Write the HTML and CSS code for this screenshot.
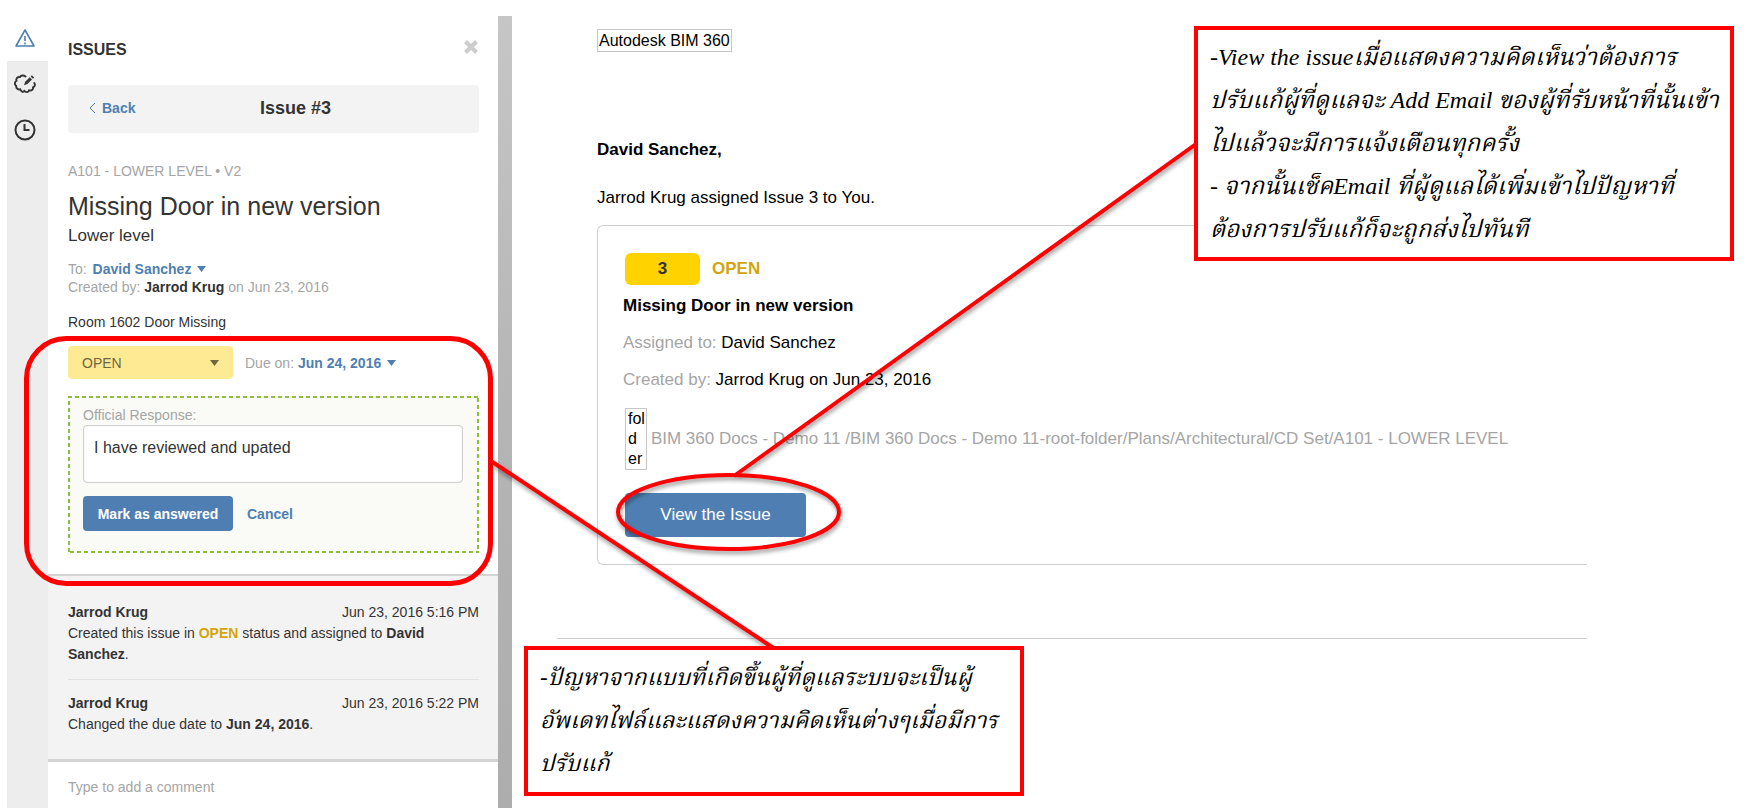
FILE: index.html
```html
<!DOCTYPE html>
<html lang="th">
<head>
    <meta charset="UTF-8">
    <meta name="viewport" content="width=device-width, initial-scale=1.0">
    <title>BIM 360 Issues</title>
    <link rel="stylesheet" href="styles.css">
</head>
<body>

    <div class="page">
        <nav class="rail">
            <button class="rail-btn active" aria-label="Issues">
                <svg width="22" height="20" viewBox="0 0 22 20" fill="none" stroke="#4f7fb2" stroke-width="1.6" stroke-linejoin="round">
                    <path d="M11 1 L20 17 H2 Z"/>
                    <path d="M11 7 V12 M11 13.500 V15.500"/>
                </svg>
            </button>
            <button class="rail-btn" aria-label="Markups">
                <svg width="22" height="20" viewBox="0 0 22 20" fill="none" stroke="#333" stroke-width="1.9" stroke-linecap="round">
                    <path d="M11.5 2.5 C9.500 1 7 1.300 6 3 C3.500 2.600 1.800 4.500 2.500 6.800 C.4 8 .4 10.500 2.200 12 C2 14.500 4 16 6.200 15.300 C7 17.500 9 18.500 10.500 17 C12 18.800 14.500 18.400 15.200 16.300 C17.500 17.200 19.300 15.500 19 13.400 C21 12.500 21.300 10.500 20.300 9"/>
                    <path d="M10 11.300 L11.200 7.700 L15.800 3.300 L18 5.600 L13.400 10.100 Z" fill="#333" stroke="none"/>
                    <path d="M16.700 2.500 L17.900 1.300 L20.100 3.600 L18.900 4.800 Z" fill="#333" stroke="none"/>
                </svg>
            </button>
            <button class="rail-btn" aria-label="History">
                <svg width="22" height="22" viewBox="0 0 22 22" fill="none" stroke="#333" stroke-width="2">
                    <circle cx="11" cy="11" r="9.500"/>
                    <path d="M10.500 5 V11 H15.500"/>
                </svg>
            </button>
        </nav>

        <aside class="panel">
            <div class="issue">
                <div class="panel-head">
                    <h2>ISSUES</h2>
                    <button class="close" aria-label="Close">
                        <svg width="14" height="14" viewBox="0 0 14 14" stroke="#ccc" stroke-width="4">
                            <path d="M1.500 1.500 L12.500 12.500 M12.500 1.500 L1.500 12.500"/>
                        </svg>
                    </button>
                </div>

                <div class="issue-bar">
                    <a class="back" href="#">
                        <svg width="7" height="12" viewBox="0 0 7 12" fill="none" stroke="#4f7fb2">
                            <path d="M6 1 L1 6 L6 11"/>
                        </svg>
                        Back
                    </a>
                    <span class="issue-number">Issue #3</span>
                </div>

                <div class="sheet">A101 - LOWER LEVEL • V2</div>
                <h1>Missing Door in new version</h1>
                <div class="location">Lower level</div>

                <div class="meta">
                    <div>To: <button class="link-btn assignee">David Sanchez <svg class="caret" width="9" height="6" viewBox="0 0 9 6"><path d="M0 0 H9 L4.500 6 Z"/></svg></button></div>
                    <div>Created by: <b>Jarrod Krug</b> on Jun 23, 2016</div>
                </div>
                <div class="description">Room 1602 Door Missing</div>

                <div class="status-row">
                    <div class="status">
                        <select aria-label="Status">
                            <option>OPEN</option>
                        </select>
                        <svg class="status-caret" width="9" height="6" viewBox="0 0 9 6"><path d="M0 0 H9 L4.500 6 Z"/></svg>
                    </div>
                    <div class="due">Due on: <button class="link-btn">Jun 24, 2016 <svg class="caret" width="9" height="6" viewBox="0 0 9 6"><path d="M0 0 H9 L4.500 6 Z"/></svg></button></div>
                </div>

                <form class="response">
                    <!-- fine dashed outline, shorter dashes than a CSS border gives -->
                    <svg class="outline" width="100%" height="100%" fill="none" stroke="#8fbc3c" stroke-width="4" stroke-dasharray="4 3">
                        <rect width="100%" height="100%"/>
                    </svg>
                    <label for="response">Official Response:</label>
                    <textarea id="response" spellcheck="false">I have reviewed and upated</textarea>
                    <div class="response-actions">
                        <button type="button" class="answered">Mark as answered</button>
                        <button type="button" class="link-btn">Cancel</button>
                    </div>
                </form>
            </div>

            <div class="activity">
                <div class="entry">
                    <div class="entry-head"><b>Jarrod Krug</b><span>Jun 23, 2016 5:16 PM</span></div>
                    <div>Created this issue in <b class="open">OPEN</b> status and assigned to <b>David Sanchez</b>.</div>
                </div>
                <div class="entry">
                    <div class="entry-head"><b>Jarrod Krug</b><span>Jun 23, 2016 5:22 PM</span></div>
                    <div>Changed the due date to <b>Jun 24, 2016</b>.</div>
                </div>
            </div>

            <input class="comment" type="text" placeholder="Type to add a comment" aria-label="Comment">
        </aside>

        <div class="divider"></div>

        <main class="email">
            <div class="email-body">
                <span class="alt-box">Autodesk BIM 360</span>
                <p class="greeting">David Sanchez,</p>
                <p>Jarrod Krug assigned Issue 3 to You.</p>

                <section class="card">
                    <div class="card-status">
                        <span class="badge">3</span>
                        <b class="open">OPEN</b>
                    </div>
                    <h3>Missing Door in new version</h3>
                    <p><span class="muted">Assigned to:</span> David Sanchez</p>
                    <p><span class="muted">Created by:</span> Jarrod Krug on Jun 23, 2016</p>
                    <div class="path">
                        <span class="alt-box folder">fol<br>d<br>er</span>
                        <span class="muted">BIM 360 Docs - Demo 11 /BIM 360 Docs - Demo 11-root-folder/Plans/Architectural/CD Set/A101 - LOWER LEVEL</span>
                    </div>
                    <a class="view" href="#">View the Issue</a>
                </section>
            </div>
            <hr>
        </main>

        <!-- red markup on top of both screens -->
        <svg class="marks" width="1752" height="811" viewBox="0 0 1752 811" fill="none" stroke="#f00" stroke-width="4">
            <rect x="26.500" y="338.500" width="464" height="245" rx="40" stroke-width="5"/>
            <g class="shadow">
                <path d="M491 461 L775 649"/>
                <path d="M734 476 L1196 144"/>
                <ellipse cx="728.500" cy="512" rx="110.500" ry="37"/>
            </g>
        </svg>

        <div class="note note-view">-View the issueเมื่อแสดงความคิดเห็นว่าต้องการ<br>
            ปรับแก้ผู้ที่ดูแลจะ Add Email ของผู้ที่รับหน้าที่นั้นเข้า<br>
            ไปแล้วจะมีการแจ้งเตือนทุกครั้ง<br>
            - จากนั้นเช็คEmail ที่ผู้ดูแลได้เพิ่มเข้าไปปัญหาที่<br>
            ต้องการปรับแก้ก็จะถูกส่งไปทันที</div>

        <div class="note note-response">-ปัญหาจากแบบที่เกิดขึ้นผู้ที่ดูแลระบบจะเป็นผู้<br>
            อัพเดทไฟล์และแสดงความคิดเห็นต่างๆเมื่อมีการ<br>
            ปรับแก้</div>
    </div>

</body>
</html>
```
FILE: styles.css
```css
* {
    box-sizing: border-box;
}
body {
    margin: 0;
    background: #fff;
    color: #333;
    font-family: "Liberation Sans", Arial, sans-serif;
    font-size: 14px;
    line-height: 18px;
}
h1, h2, h3, p {
    margin: 0;
}
button {
    padding: 0;
    border: none;
    background: none;
    font: inherit;
    cursor: pointer;
}
svg {
    display: block;
}
.page {
    position: relative;
    display: flex;
    min-height: 100vh;
    padding: 16px 0 3px 7px;
}

/* left icon rail */
.rail {
    width: 41px;
    flex-shrink: 0;
    background: #ededed;
}
.rail-btn {
    display: flex;
    justify-content: center;
    align-items: center;
    width: 100%;
    height: 46px;
    padding-right: 6px;
}
.rail-btn.active {
    height: 45px;
    background: #fff;
}

/* issues panel */
.panel {
    display: flex;
    flex-direction: column;
    width: 450px;
    flex-shrink: 0;
}
.issue {
    padding: 24px 19px 21px 20px;
}
.panel-head {
    display: flex;
    justify-content: space-between;
    padding-right: 1px;
    margin-bottom: 25px;
}
.panel-head h2 {
    font-size: 16px;
    line-height: 20px;
}
.close {
    height: 14px;
}
.issue-bar {
    display: grid;
    grid-template-columns: 171px 1fr;
    align-items: center;
    height: 48px;
    padding: 0 0 2px 21px;
    background: #f3f3f3;
    border-radius: 4px;
}
.back {
    display: flex;
    align-items: center;
    gap: 6px;
    color: #4f7fb2;
    font-weight: bold;
    text-decoration: none;
}
.issue-number {
    font-size: 18px;
    font-weight: bold;
}
.sheet {
    margin-top: 29px;
    color: #a5a5a5;
}
h1 {
    margin-top: 10px;
    font-size: 25px;
    font-weight: normal;
    line-height: 32px;
}
.location {
    margin-top: 2px;
    font-size: 17px;
    line-height: 24px;
}
.meta {
    margin-top: 12px;
    color: #a5a5a5;
}
.meta b {
    color: #333;
}
.link-btn {
    color: #4f7fb2;
    font-weight: bold;
}
.assignee {
    margin-left: 2px;
}
.caret {
    display: inline-block;
    margin-left: 2px;
    vertical-align: 2px;
    fill: #4f7fb2;
}
.description {
    margin-top: 17px;
}
.status-row {
    display: flex;
    align-items: center;
    gap: 12px;
    margin: 15px 0 17px;
}
.status {
    position: relative;
    width: 165px;
}
.status select {
    width: 100%;
    height: 33px;
    padding: 0 14px;
    border: none;
    border-radius: 4px;
    background: #ffea94;
    color: #6f673f;
    font: inherit;
    appearance: none;
}
.status-caret {
    position: absolute;
    top: 14px;
    right: 14px;
    fill: #6f673f;
    pointer-events: none;
}
.due {
    color: #a5a5a5;
}
.response {
    position: relative;
    display: flex;
    flex-direction: column;
    padding: 10px 16px 22px 15px;
    background: #fafbf6;
}
.outline {
    position: absolute;
    top: 0;
    left: 0;
    pointer-events: none;
}
.response label {
    color: #a5a5a5;
}
.response textarea {
    height: 58px;
    margin: 1px 0 13px;
    padding: 11px 10px;
    border: 1px solid #d0d0d0;
    border-radius: 4px;
    box-shadow: inset 0 0 1px #ccc;
    background: #fff;
    color: #333;
    font: 16px/22px "Liberation Sans", Arial, sans-serif;
    resize: none;
    overflow: hidden;
}
.response-actions {
    display: flex;
    align-items: center;
    gap: 14px;
}
.answered {
    width: 150px;
    height: 35px;
    border-radius: 4px;
    background: #4f7fb2;
    color: #fff;
    font-weight: bold;
}
.activity {
    padding: 26px 19px 24px 20px;
    border-top: 2px solid #d3d3d3;
    border-bottom: 3px solid #d3d3d3;
    background: #f3f3f3;
    line-height: 21px;
}
.entry + .entry {
    margin-top: 14px;
    padding-top: 13px;
    border-top: 1px solid #e2e2e2;
}
.entry-head {
    display: flex;
    justify-content: space-between;
}
.open {
    color: #d2a50e;
}
.comment {
    flex: 1;
    padding: 4px 20px 0;
    border: none;
    background: #fff;
    color: #333;
    font: inherit;
}
.comment::placeholder {
    color: #a5a5a5;
}
.divider {
    width: 14px;
    flex-shrink: 0;
    background: linear-gradient(#c6c6c6, #b5b5b5 50%, #adadad);
}

/* notification mail */
.email {
    flex: 1;
    padding: 13px 165px 0 45px;
    color: #000;
    font-size: 17px;
    line-height: 24px;
}
.email-body {
    padding-left: 40px;
}
.alt-box {
    display: inline-block;
    padding: 0 1px;
    border: 1px solid #c6c6c6;
    font-size: 16px;
    line-height: 21px;
}
.greeting {
    margin: 85px 0 24px;
    font-weight: bold;
}
.card {
    margin-top: 15px;
    padding: 27px 0 27px 25px;
    border: 1px solid #cfcfcf;
    border-right: none;
    border-radius: 6px 0 0 6px;
}
.card-status {
    display: flex;
    align-items: center;
    gap: 12px;
    padding-left: 2px;
    margin-bottom: 9px;
}
.badge {
    width: 75px;
    border-radius: 6px;
    background: #ffd200;
    color: #333;
    font-weight: bold;
    line-height: 32px;
    text-align: center;
}
.card h3 {
    font-size: 17px;
}
.card p {
    margin-top: 13px;
}
.muted {
    color: #a5a5a5;
}
.path {
    display: flex;
    align-items: center;
    gap: 4px;
    margin: 16px 0 23px;
    padding-left: 2px;
}
.folder {
    padding-left: 2px;
    line-height: 20px;
}
.view {
    display: block;
    width: 181px;
    margin-left: 2px;
    border-radius: 4px;
    background: #4f7fb2;
    color: #fff;
    line-height: 44px;
    text-align: center;
    text-decoration: none;
}
hr {
    margin: 73px 0 0;
    border: none;
    border-top: 1px solid #cfcfcf;
}

/* markup and callouts */
.marks {
    position: absolute;
    top: 0;
    left: 0;
    pointer-events: none;
}
.shadow {
    filter: drop-shadow(1px 3px 2px rgba(0, 0, 0, 0.4));
}
.note {
    position: absolute;
    border: 4px solid #f00;
    background: #fff;
    color: #000;
    font-family: "Liberation Serif", "Angsana New", "Noto Serif Thai", serif;
    font-size: 24px;
    font-style: italic;
    line-height: 43px;
    white-space: nowrap;
}
.note-view {
    top: 26px;
    left: 1194px;
    width: 540px;
    padding: 6px 12px;
}
.note-response {
    top: 646px;
    left: 524px;
    width: 500px;
    padding: 6px 12px 7px;
    font-size: 23px;
}
```
